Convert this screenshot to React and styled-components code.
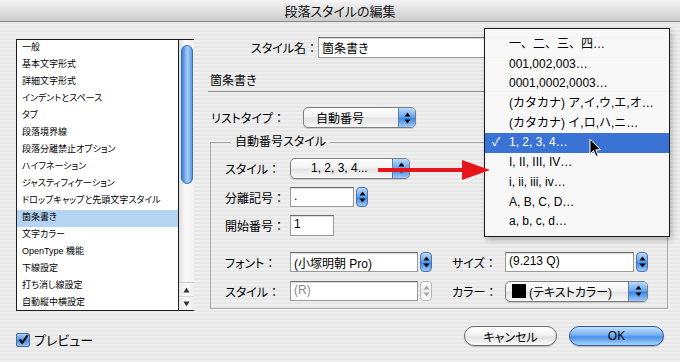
import React from "react";
import styled, { createGlobalStyle } from "styled-components";

const GlobalStyle = createGlobalStyle`
  html, body { margin: 0; padding: 0; background: #ececec; }
  body { font-family: "Liberation Sans", "Noto Sans CJK JP", sans-serif; }
`;

const Window = styled.div`
  position: relative;
  width: 680px;
  height: 362px;
  overflow: hidden;
  background: repeating-linear-gradient(to bottom, #efefef 0 2px, #e7e7e7 2px 4px);
  font-family: "Liberation Sans", "Noto Sans CJK JP", sans-serif;
  font-feature-settings: "palt";
  color: #000;
`;

const TitleBar = styled.div`
  height: 21px;
  border-bottom: 1px solid #8a8a8a;
  background: linear-gradient(#f5f5f5, #e2e2e2 45%, #cdcdcd);
  display: flex;
  align-items: center;
  justify-content: center;
  font-size: 13px;
  color: #111;
`;

const Body = styled.div`
  display: flex;
  padding: 0 12px 0 16px;
`;

const LeftCol = styled.div`
  width: 178px;
  display: flex;
  flex-direction: column;
  padding-top: 17px;
`;

const ListBox = styled.div`
  display: flex;
  height: 270px;
  border: 1px solid #1e1e1e;
  border-right: none;
  background: #fff;
`;

const Items = styled.div`
  flex: 1;
  overflow: hidden;
`;

const Item = styled.div`
  height: 17px;
  line-height: 14px;
  padding-left: 5px;
  font-size: 9px;
  white-space: nowrap;
  background: ${(p) => (p.$selected ? "#b5d3f3" : "transparent")};
`;

const ScrollBar = styled.div`
  width: 15px;
  border-left: 1px solid #1e1e1e;
  background: linear-gradient(to right, #dcdcdc, #fafafa 40%, #f2f2f2);
  display: flex;
  flex-direction: column;
`;

const Track = styled.div`
  flex: 1;
  padding: 5px 1px 0 2px;
`;

const Thumb = styled.div`
  height: 137px;
  border-radius: 6px;
  border: 1px solid #3a6fb8;
  background: linear-gradient(to right, #3f7fd8, #a6d0f8 55%, #5c9ae6);
`;

const ArrowBtn = styled.div`
  height: 13px;
  display: flex;
  align-items: center;
  justify-content: center;
  border-top: 1px solid ${(p) => (p.$first ? "#c9c9c9" : "#d8d8d8")};
  background: linear-gradient(to right, #e6e6e6, #fbfbfb 50%, #ececec);
`;

const PreviewRow = styled.label`
  display: flex;
  align-items: center;
  gap: 4px;
  margin-top: 19px;
  font-size: 13px;
`;

const CheckBox = styled.span`
  width: 12px;
  height: 12px;
  border: 1px solid #4a6f9e;
  border-radius: 2px;
  background: linear-gradient(#a9cdf6, #4c90e4 55%, #8fc1f6);
  display: flex;
  align-items: center;
  justify-content: center;
`;

const RightCol = styled.div`
  flex: 1;
  margin-left: 14px;
  padding-top: 15px;
  display: flex;
  flex-direction: column;
`;

const Row = styled.div`
  display: flex;
  align-items: center;
  height: ${(p) => p.$h || 21}px;
  margin-top: ${(p) => p.$mt || 0}px;
`;

const Label = styled.div`
  width: ${(p) => p.$w}px;
  padding-left: ${(p) => p.$pl || 0}px;
  text-align: ${(p) => p.$align || "left"};
  font-size: 12px;
  white-space: nowrap;
  flex-shrink: 0;
`;

const Colon = styled.span`
  font-feature-settings: normal;
`;

const TextField = styled.div`
  width: ${(p) => p.$w}px;
  height: ${(p) => p.$h || 21}px;
  box-sizing: border-box;
  background: #fff;
  border: 1px solid #9a9a9a;
  border-top-color: #6e6e6e;
  box-shadow: inset 0 1px 1px rgba(0, 0, 0, 0.15);
  padding: 1px 3px;
  font-size: ${(p) => p.$fs || 12}px;
  color: ${(p) => (p.$disabled ? "#8a8a8a" : "#000")};
  white-space: nowrap;
  overflow: hidden;
`;

const Heading = styled.div`
  margin-top: 16px;
  height: 17px;
  border-bottom: 1px solid #8e8e8e;
  padding-left: 2px;
  font-size: 12px;
  line-height: 14px;
`;

const Popup = styled.div`
  width: ${(p) => p.$w}px;
  height: 21px;
  box-sizing: border-box;
  display: flex;
  border: 1px solid #7d7d7d;
  border-radius: 5px;
  overflow: hidden;
  background: linear-gradient(#ffffff, #f3f3f3 45%, #e4e4e4 55%, #f8f8f8);
  box-shadow: 0 1px 1px rgba(0, 0, 0, 0.15);
  font-size: 12px;
`;

const PopupText = styled.div`
  flex: 1;
  display: flex;
  align-items: center;
  gap: 3px;
  padding-left: ${(p) => p.$pl || 12}px;
  white-space: nowrap;
`;

const BlueKnob = styled.div`
  width: ${(p) => p.$w || 16}px;
  display: flex;
  align-items: center;
  justify-content: center;
  border-left: 1px solid #5c7fae;
  background: linear-gradient(#b9dafb, #6ba8ee 45%, #3e87e4 55%, #9ccaf9);
`;

const Combo = styled.div`
  display: flex;
  align-items: center;
  gap: 2px;
`;

const ComboKnob = styled.div`
  width: 12px;
  height: 20px;
  box-sizing: border-box;
  display: flex;
  align-items: center;
  justify-content: center;
  border-radius: 4px;
  border: 1px solid ${(p) => (p.$disabled ? "#b8b8b8" : "#4f74a8")};
  background: ${(p) =>
    p.$disabled
      ? "linear-gradient(#fdfdfd, #eeeeee 50%, #f8f8f8)"
      : "linear-gradient(#b9dafb, #6ba8ee 45%, #3e87e4 55%, #9ccaf9)"};
`;

const Group = styled.fieldset`
  margin: 7px 0 0 2px;
  padding: 2px 0 7px 14px;
  border: 1px solid #a8a8a8;
  box-shadow: 0 1px 0 #fafafa;
  display: flex;
  flex-direction: column;
`;

const Legend = styled.legend`
  margin-left: 6px;
  padding: 0 4px;
  font-size: 12px;
  line-height: 14px;
`;

const Swatch = styled.span`
  width: 14px;
  height: 14px;
  background: #000;
  display: inline-block;
`;

const ButtonRow = styled.div`
  display: flex;
  justify-content: flex-end;
  gap: 12px;
  margin-top: 17px;
  padding-right: 4px;
`;

const Button = styled.div`
  width: ${(p) => p.$w}px;
  height: 20px;
  box-sizing: border-box;
  border-radius: 10px;
  border: 1px solid ${(p) => (p.$primary ? "#2f5c9c" : "#6c6c6c")};
  display: flex;
  align-items: center;
  justify-content: center;
  font-size: 12px;
  background: ${(p) =>
    p.$primary
      ? "linear-gradient(#c4e0fc, #75b0f0 45%, #4b91e8 55%, #a9d3fb)"
      : "linear-gradient(#ffffff, #f2f2f2 45%, #e2e2e2 55%, #fbfbfb)"};
  box-shadow: 0 1px 1px rgba(0, 0, 0, 0.2);
`;

const Menu = styled.div`
  position: absolute;
  left: 484px;
  top: 28px;
  width: 186px;
  height: 209px;
  box-sizing: border-box;
  border: 1px solid #1a1a1a;
  background: rgba(248, 248, 248, 0.97);
  padding-top: 6px;
  box-shadow: 2px 3px 6px rgba(0, 0, 0, 0.25);
  font-feature-settings: normal;
`;

const MenuItem = styled.div`
  position: relative;
  height: 19.7px;
  line-height: 19.7px;
  padding-left: 24px;
  font-size: 12px;
  white-space: nowrap;
  color: ${(p) => (p.$selected ? "#fff" : "#000")};
  background: ${(p) => (p.$selected ? "#3a73d4" : "transparent")};
`;

const Check = styled.span`
  position: absolute;
  left: 7px;
  top: 0;
`;

const ArrowOverlay = styled.svg`
  position: absolute;
  left: 376px;
  top: 158px;
`;

const Cursor = styled.svg`
  position: absolute;
  left: 589px;
  top: 138px;
`;

const UpDown = ({ color = "#000" }) => (
  <svg width="7" height="12" viewBox="0 0 7 12">
    <path d="M3.5 0.5 L6.5 4.5 L0.5 4.5 Z" fill={color} />
    <path d="M3.5 11.5 L6.5 7.5 L0.5 7.5 Z" fill={color} />
  </svg>
);

const listItems = [
  "一般",
  "基本文字形式",
  "詳細文字形式",
  "インデントとスペース",
  "タブ",
  "段落境界線",
  "段落分離禁止オプション",
  "ハイフネーション",
  "ジャスティフィケーション",
  "ドロップキャップと先頭文字スタイル",
  "箇条書き",
  "文字カラー",
  "OpenType 機能",
  "下線設定",
  "打ち消し線設定",
  "自動縦中横設定",
];

const menuItems = [
  "一、二、三、四…",
  "001,002,003…",
  "0001,0002,0003…",
  "(カタカナ) ア,イ,ウ,エ,オ…",
  "(カタカナ) イ,ロ,ハ,ニ…",
  "1, 2, 3, 4…",
  "I, II, III, IV…",
  "i, ii, iii, iv…",
  "A, B, C, D…",
  "a, b, c, d…",
];

export default function App() {
  return (
    <>
      <GlobalStyle />
      <Window>
        <TitleBar>段落スタイルの編集</TitleBar>
        <Body>
          <LeftCol>
            <ListBox>
              <Items>
                {listItems.map((t, i) => (
                  <Item key={i} $selected={t === "箇条書き"}>
                    {t}
                  </Item>
                ))}
              </Items>
              <ScrollBar>
                <Track>
                  <Thumb />
                </Track>
                <ArrowBtn $first>
                  <svg width="7" height="6" viewBox="0 0 7 6">
                    <path d="M3.5 0.5 L6.5 5.5 L0.5 5.5 Z" fill="#333" />
                  </svg>
                </ArrowBtn>
                <ArrowBtn>
                  <svg width="7" height="6" viewBox="0 0 7 6">
                    <path d="M3.5 5.5 L6.5 0.5 L0.5 0.5 Z" fill="#333" />
                  </svg>
                </ArrowBtn>
              </ScrollBar>
            </ListBox>
            <PreviewRow>
              <CheckBox>
                <svg width="11" height="11" viewBox="0 0 11 11">
                  <path d="M1.5 5.5 L4.2 8.8 L9.8 1" stroke="#000" strokeWidth="2" fill="none" />
                </svg>
              </CheckBox>
              プレビュー
            </PreviewRow>
          </LeftCol>

          <RightCol>
            <Row>
              <Label $w={110} $align="right">スタイル名<Colon>：</Colon></Label>
              <TextField $w={350}>箇条書き</TextField>
            </Row>

            <Heading>箇条書き</Heading>

            <Row $mt={15}>
              <Label $w={92} $pl={3}>リストタイプ<Colon>：</Colon></Label>
              <Popup $w={113}>
                <PopupText>自動番号</PopupText>
                <BlueKnob>
                  <UpDown />
                </BlueKnob>
              </Popup>
            </Row>

            <Group>
              <Legend>自動番号スタイル</Legend>
              <Row $mt={6} $h={22}>
                <Label $w={65}>スタイル<Colon>：</Colon></Label>
                <Popup $w={120}>
                  <PopupText $pl={20}>1, 2, 3, 4...</PopupText>
                  <BlueKnob>
                    <UpDown />
                  </BlueKnob>
                </Popup>
              </Row>
              <Row $mt={8} $h={20}>
                <Label $w={65}>分離記号<Colon>：</Colon></Label>
                <Combo>
                  <TextField $w={64} $h={20}>.</TextField>
                  <ComboKnob>
                    <UpDown />
                  </ComboKnob>
                </Combo>
              </Row>
              <Row $mt={8} $h={21}>
                <Label $w={65}>開始番号<Colon>：</Colon></Label>
                <TextField $w={44}>1</TextField>
              </Row>
              <Row $mt={16} $h={20}>
                <Label $w={65}>フォント<Colon>：</Colon></Label>
                <Combo>
                  <TextField $w={128} $h={20}>(小塚明朝 Pro)</TextField>
                  <ComboKnob>
                    <UpDown />
                  </ComboKnob>
                </Combo>
                <Label $w={53} style={{ marginLeft: 20 }}>サイズ<Colon>：</Colon></Label>
                <Combo>
                  <TextField $w={129} $h={20}>(9.213 Q)</TextField>
                  <ComboKnob>
                    <UpDown />
                  </ComboKnob>
                </Combo>
              </Row>
              <Row $mt={9} $h={20}>
                <Label $w={65}>スタイル<Colon>：</Colon></Label>
                <Combo>
                  <TextField $w={128} $h={20} $disabled>(R)</TextField>
                  <ComboKnob $disabled>
                    <UpDown color="#a8a8a8" />
                  </ComboKnob>
                </Combo>
                <Label $w={53} style={{ marginLeft: 20 }}>カラー<Colon>：</Colon></Label>
                <Popup $w={143}>
                  <PopupText $pl={6}>
                    <Swatch />
                    (テキストカラー)
                  </PopupText>
                  <BlueKnob $w={18}>
                    <UpDown />
                  </BlueKnob>
                </Popup>
              </Row>
            </Group>

            <ButtonRow>
              <Button $w={93}>キャンセル</Button>
              <Button $w={95} $primary>OK</Button>
            </ButtonRow>
          </RightCol>
        </Body>

        <Menu>
          {menuItems.map((t, i) => (
            <MenuItem key={i} $selected={i === 5}>
              {i === 5 && <Check>✓</Check>}
              {t}
            </MenuItem>
          ))}
        </Menu>

        <ArrowOverlay width="116" height="24" viewBox="0 0 116 24">
          <rect x="2" y="10" width="86" height="4" fill="#e5161b" />
          <path d="M86 2 L114 12 L86 22 Z" fill="#e5161b" />
        </ArrowOverlay>

        <Cursor width="13" height="21" viewBox="0 0 13 21">
          <path
            d="M1 1 L1 16 L4.5 12.5 L7 18.5 L9.2 17.6 L6.8 11.8 L11.5 11.8 Z"
            fill="#000"
            stroke="#fff"
            strokeWidth="1"
          />
        </Cursor>
      </Window>
    </>
  );
}
